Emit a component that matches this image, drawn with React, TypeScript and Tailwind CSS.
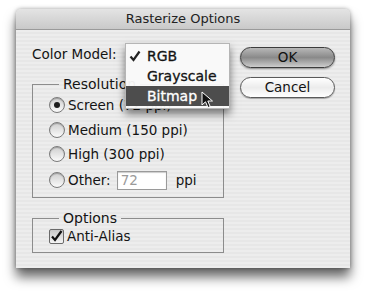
import type { ReactNode } from 'react';

const font = { fontFamily: '"DejaVu Sans", "Liberation Sans", sans-serif' };

function Radio({ checked, children }: { checked?: boolean; children: ReactNode }) {
  return (
    <div className="flex items-center h-[24.5px]">
      <span className="w-[16px] h-[16px] rounded-full border border-[#7a7a7a] bg-gradient-to-b from-[#cfcfcf] to-[#fafafa] flex items-center justify-center shadow-[inset_0_1px_1px_rgba(0,0,0,0.25)]">
        {checked && <span className="w-[6px] h-[6px] rounded-full bg-[#1c1c1c]" />}
      </span>
      <span className="ml-[3px]">{children}</span>
    </div>
  );
}

function Group({ title, className, children }: { title: string; className?: string; children: ReactNode }) {
  return (
    <fieldset className={'border border-[#8c8c8c] ' + (className ?? '')}>
      <legend className="ml-[10px] px-[4px] leading-[16px] text-[14px]">{title}</legend>
      {children}
    </fieldset>
  );
}

function PillButton({ label, primary }: { label: string; primary?: boolean }) {
  return (
    <button
      className={
        'w-[95px] h-[21px] rounded-full border text-[13.5px] leading-none flex items-center justify-center ' +
        (primary
          ? 'border-[#3c3c3c] bg-gradient-to-b from-[#b8b8b8] via-[#8a8a8a] to-[#cdcdcd] shadow-[0_1px_2px_rgba(0,0,0,0.4)] text-[#111]'
          : 'border-[#5a5a5a] bg-gradient-to-b from-[#ffffff] via-[#ececec] to-[#ffffff] shadow-[0_1px_1px_rgba(0,0,0,0.3)] text-[#111]')
      }
    >
      {label}
    </button>
  );
}

export default function App() {
  return (
    <div className="w-[367px] h-[294px] bg-white pt-[9px] pl-[16px] overflow-hidden" style={font}>
      <div className="w-[334px] h-[259px] rounded-t-[5px] bg-[#ebebeb] shadow-[0_9px_12px_rgba(0,0,0,0.6),0_0_4px_rgba(0,0,0,0.35)] flex flex-col text-[13.5px] text-[#141414]">
        <div className="h-[21px] rounded-t-[5px] bg-gradient-to-b from-[#e4e4e4] to-[#c9c9c9] border-b border-[#9a9a9a] flex items-center justify-center text-[13px] text-[#222]">
          Rasterize Options
        </div>

        <div className="relative flex-1 flex pl-[16px] pt-[16px] bg-[repeating-linear-gradient(0deg,#ededed_0px,#ededed_2px,#e7e7e7_2px,#e7e7e7_4px)]">
          <div className="w-[192px] flex flex-col">
            <div className="h-[17px] flex items-center">Color Model:</div>

            <Group title="Resolution" className="mt-[13px] h-[122px] pl-[16px] pt-[1px]">
              <Radio checked>Screen (72 ppi)</Radio>
              <Radio>Medium (150 ppi)</Radio>
              <Radio>High (300 ppi)</Radio>
              <div className="flex items-center h-[27px]">
                <Radio>Other:</Radio>
                <span className="ml-[6px] w-[50px] h-[19px] border border-[#9a9a9a] bg-white text-[#9a9a9a] pl-[3px] flex items-center shadow-[inset_0_1px_1px_rgba(0,0,0,0.2)]">
                  72
                </span>
                <span className="ml-[9px]">ppi</span>
              </div>
            </Group>

            <Group title="Options" className="mt-[12px] h-[43px] pl-[16px]">
              <div className="flex items-center h-[20px]">
                <span className="w-[15px] h-[15px] border border-[#6a6a6a] rounded-[2px] bg-gradient-to-b from-[#c8c8c8] to-[#f4f4f4] flex items-center justify-center">
                  <svg width="13" height="13" viewBox="0 0 13 13">
                    <path d="M2 6.5 L5 10 L11.5 1" fill="none" stroke="#111" strokeWidth="2.2" />
                  </svg>
                </span>
                <span className="ml-[3px]">Anti-Alias</span>
              </div>
            </Group>
          </div>

          <div className="ml-[16px] flex flex-col gap-[9px] pt-[1px]">
            <PillButton label="OK" primary />
            <PillButton label="Cancel" />
          </div>

          <div className="absolute left-[109px] top-[13px] w-[105px] py-[2px] bg-[#fafafa]/95 border border-[#b5b5b5] shadow-[0_5px_8px_rgba(0,0,0,0.5)] text-[14px] [-webkit-text-stroke:0.3px_currentColor]">
            <div className="h-[20px] flex items-center">
              <span className="w-[21px] pl-[3px] flex items-center">
                <svg width="12" height="12" viewBox="0 0 12 12">
                  <path d="M1.5 6.5 L4.5 10 L10.5 1.5" fill="none" stroke="#222" strokeWidth="2.2" />
                </svg>
              </span>
              RGB
            </div>
            <div className="h-[20px] flex items-center pl-[21px]">Grayscale</div>
            <div className="h-[20px] flex items-center pl-[21px] bg-[#4d4d4d] text-white">Bitmap</div>
          </div>

          <svg className="absolute left-[185px] top-[61px]" width="13" height="18" viewBox="0 0 13 18">
            <path d="M1 1 L1 14 L4.5 10.8 L7 16.5 L9.2 15.5 L6.8 10 L11.5 10 Z" fill="#111" stroke="#fff" strokeWidth="1" />
          </svg>
        </div>
      </div>
    </div>
  );
}
